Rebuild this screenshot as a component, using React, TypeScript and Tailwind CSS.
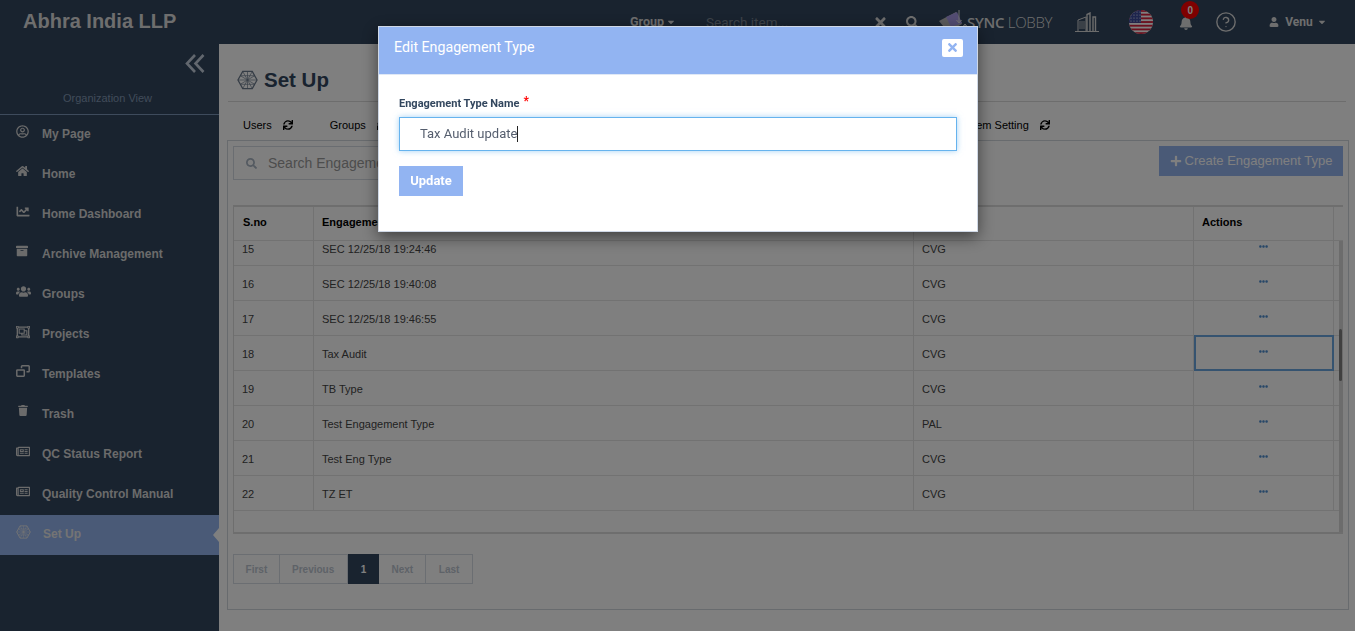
import React from "react";
import {
  FaRegUserCircle, FaHome, FaChartLine, FaArchive, FaUsers, FaRegObjectGroup,
  FaTrash, FaRegNewspaper, FaSync, FaSearch, FaTimes, FaCaretDown, FaUser,
  FaBell, FaPlus, FaEllipsisH,
} from "react-icons/fa";
import { CircleHelp } from "lucide-react";

function Hex({ className }: { className?: string }) {
  return (
    <svg viewBox="0 0 22 20" className={className} fill="none" stroke="currentColor">
      <path d="M6 1h10l5 9-5 9H6L1 10z" strokeWidth="1.3" />
      <path d="M6 1l10 18M16 1L6 19M1 10h20M3.5 5.5l15 9M18.5 5.5l-15 9M11 1v18M3.5 14.5h15M3.5 5.5h15" strokeWidth="0.7" />
    </svg>
  );
}

function Ungroup({ className }: { className?: string }) {
  return (
    <svg viewBox="0 0 14 12" className={className} fill="none" stroke="currentColor" strokeWidth="1.5">
      <rect x="0.8" y="5" width="7.5" height="6.2" rx="0.6" />
      <path d="M5.5 3.2V1.5a.7.7 0 0 1 .7-.7h6.3a.7.7 0 0 1 .7.7v4.6a.7.7 0 0 1-.7.7h-2" />
    </svg>
  );
}

function Flag() {
  const stripes = [0, 2, 4, 6, 8, 10, 12];
  return (
    <svg viewBox="0 0 24 24" className="w-6 h-6">
      <defs>
        <clipPath id="flag-circle">
          <circle cx="12" cy="12" r="12" />
        </clipPath>
      </defs>
      <g clipPath="url(#flag-circle)">
        <rect width="24" height="24" fill="#ffffff" />
        {stripes.map((s) => (
          <rect key={s} x="0" y={s * 1.85} width="24" height="1.85" fill="#d8203c" />
        ))}
        <rect width="12" height="12.9" fill="#3c4a9c" />
        {[2, 5, 8, 11].map((y) =>
          [2, 5, 8, 11].map((x) => <circle key={`${x}-${y}`} cx={x} cy={y} r="0.6" fill="#ffffff" />)
        )}
      </g>
    </svg>
  );
}

function Building() {
  return (
    <svg viewBox="0 0 24 20" className="w-[24px] h-[20px]" fill="none" stroke="#d8d8d8" strokeWidth="1">
      <path d="M0 19.5h24" />
      <path d="M3 19V8l8-3v14" />
      <path d="M4 10h6M4 12h6M4 14h6M4 16h6" strokeWidth="0.8" />
      <path d="M12 19V2.5l3-1.5V19" strokeWidth="1.4" />
      <path d="M18 19V5h2.5v14" strokeWidth="1.4" />
    </svg>
  );
}

function SyncLogo() {
  return (
    <div className="flex items-center">
      <svg viewBox="0 0 30 26" className="w-[30px] h-[26px]">
        <path d="M1 12L18 3l6 12-14 8z" fill="#b9b9b9" />
        <path d="M8 8l11-5 5 11-11 4z" fill="#a79ae6" />
        <path d="M21 1v13M18.5 11l2.5 3 2.5-3M27 24V15M24.5 18l2.5-3 2.5 3" stroke="#e4e4e4" strokeWidth="1" fill="none" />
      </svg>
      <span className="ml-[-1px] text-[15px] text-[#dcdcdc] font-['Open_Sans',sans-serif] tracking-[-0.3px]">
        <span className="font-semibold">SYNC</span> <span className="font-light">LOBBY</span>
      </span>
    </div>
  );
}

const menu: [React.ReactNode, string][] = [
  [<FaRegUserCircle className="w-[13px] h-[13px]" />, "My Page"],
  [<FaHome className="w-[13px] h-[12px]" />, "Home"],
  [<FaChartLine className="w-[14px] h-[13px]" />, "Home Dashboard"],
  [<FaArchive className="w-[12px] h-[12px]" />, "Archive Management"],
  [<FaUsers className="w-[15px] h-[15px] -mt-[1px]" />, "Groups"],
  [<FaRegObjectGroup className="w-[14px] h-[14px]" />, "Projects"],
  [<Ungroup className="w-[14px] h-[12px]" />, "Templates"],
  [<FaTrash className="w-[10px] h-[11px] ml-[2px]" />, "Trash"],
  [<FaRegNewspaper className="w-[14px] h-[13px]" />, "QC Status Report"],
  [<FaRegNewspaper className="w-[14px] h-[13px]" />, "Quality Control Manual"],
];

const rows: [string, string, string][] = [
  ["15", "SEC 12/25/18 19:24:46", "CVG"],
  ["16", "SEC 12/25/18 19:40:08", "CVG"],
  ["17", "SEC 12/25/18 19:46:55", "CVG"],
  ["18", "Tax Audit", "CVG"],
  ["19", "TB Type", "CVG"],
  ["20", "Test Engagement Type", "PAL"],
  ["21", "Test Eng Type", "CVG"],
  ["22", "TZ ET", "CVG"],
];

const cols = "grid grid-cols-[80px_600px_280px_140px]";

function Sidebar() {
  return (
    <aside className="w-[219px] shrink-0 bg-[#32465e] flex flex-col">
      <div className="h-[70px] relative shrink-0">
        <div className="flex justify-end pr-[14px] pt-[10px] text-[#c4cedd]">
          <svg viewBox="0 0 20 19" className="w-[20px] h-[19px]" fill="none" stroke="currentColor" strokeWidth="2.6">
            <path d="M10 1L2 9.5 10 18M18.5 1L10.5 9.5l8 8.5" />
          </svg>
        </div>
        <div className="absolute left-0 right-[4px] top-[46px] text-center text-[11px] text-[#8298b4]">Organization View</div>
      </div>
      <div className="border-t border-[#7d97b8]">
        {menu.map(([icon, label]) => (
          <div key={label} className="h-[40px] flex text-[#d6d6d6] pl-[16px]">
            <span className="w-[26px] pt-[10px] shrink-0">{icon}</span>
            <span className="pt-[12px] text-[12px] leading-[14px] font-bold">{label}</span>
          </div>
        ))}
        <div className="h-[40px] flex text-[#e8e8e8] pl-[16px] bg-[#94b4ee] relative">
          <span className="w-[27px] pt-[10px] shrink-0"><Hex className="w-[15px] h-[14px]" /></span>
          <span className="pt-[12px] text-[12px] leading-[14px] font-bold">Set Up</span>
          <span className="absolute right-0 top-[13px] w-0 h-0 border-y-[7px] border-y-transparent border-r-[6px] border-r-white" />
        </div>
      </div>
    </aside>
  );
}

function Tab({ label, className }: { label: string; className?: string }) {
  return (
    <div className={`flex items-center text-[11px] text-black ${className ?? ""}`}>
      <span>{label}</span>
      <FaSync className="w-[10px] h-[10px] ml-[11px]" />
    </div>
  );
}

function Table() {
  return (
    <div className="ml-[5px] mt-[25px] h-[329px] border-2 border-l border-r-0 border-[#dcdcdc] relative overflow-hidden w-[1110px] bg-white">
      <div className={`${cols} h-[34px] text-[11px] font-bold text-black border-b border-[#e4e4e4]`}>
        <div className="px-[9px] pb-[2px] flex items-center border-r border-[#e4e4e4]">S.no</div>
        <div className="px-[8px] pb-[2px] flex items-center border-r border-[#e4e4e4]">Engagement Type</div>
        <div className="px-[8px] pb-[2px] flex items-center border-r border-[#e4e4e4]">Client</div>
        <div className="px-[8px] pb-[2px] flex items-center border-r border-[#e4e4e4]">Actions</div>
      </div>
      <div className="-mt-[10px]">
        {rows.map(([n, name, by]) => {
          const selected = n === "18";
          return (
            <div key={n} className={`${cols} h-[35px] text-[11px] text-[#444] border-b border-[#e4e4e4]`}>
              <div className="px-[8px] pt-[2px] flex items-center border-r border-[#e4e4e4]">{n}</div>
              <div className="px-[8px] pt-[2px] flex items-center border-r border-[#e4e4e4]">{name}</div>
              <div className="px-[8px] pt-[2px] flex items-center border-r border-[#e4e4e4]">{by}</div>
              <div className={`flex justify-center text-[#4f8fd0] ${selected ? "border-2 border-[#6ba6e0] pt-[10px] pr-[1px] -my-px" : "pt-[11px] border-r border-[#e4e4e4]"}`}>
                <FaEllipsisH className="w-[9px] h-[9px]" />
              </div>
            </div>
          );
        })}
      </div>
      <div className="absolute top-[34px] right-0 w-[4px] bottom-0 bg-[#d8d8d8]">
        <div className="absolute top-[88px] h-[52px] w-[3px] left-0 rounded bg-[#808080]" />
      </div>
    </div>
  );
}

function Pagination() {
  const items: [string, string][] = [["First", "w-[47px]"], ["Previous", "w-[68px]"], ["1", "w-[32px]"], ["Next", "w-[47px]"], ["Last", "w-[47px]"]];
  return (
    <div className="flex ml-[5px] mt-[20px] h-[30px] w-[240px]">
      {items.map(([t, w]) => (
        <div
          key={t}
          className={`${w} flex items-center justify-center text-[10px] font-bold ${t === "1" ? "bg-[#32465e] text-white" : "border border-l-0 first:border-l border-[#d6dce4] text-[#bcc5d0]"}`}
        >
          {t}
        </div>
      ))}
    </div>
  );
}

function Main() {
  return (
    <main className="flex-1 bg-white pl-[8px] pr-[6px] min-w-0">
      <div className="h-[58px] ml-px w-[1118px] border-b border-[#dadada] flex items-center pl-[9px] pt-[15px] gap-[6px] text-[#32465e]">
        <Hex className="w-[21px] h-[20px] text-[#6b7a8c]" />
        <h1 className="text-[20.5px] font-bold leading-none">Set Up</h1>
      </div>
      <div className="h-[38px] flex items-center pl-[16px] pt-[8px]">
        <Tab label="Users" />
        <Tab label="Groups" className="ml-[37px]" />
        <Tab label="System Setting" className="ml-[568px]" />
      </div>
      <div className="border border-[#d0d6dc] h-[470px] w-[1122px]">
        <div className="flex justify-between items-start pt-[5px] pl-[5px] pr-[5px]">
          <div className="w-[400px] h-[34px] border border-[#d5dbe3] flex items-center pl-[12px] text-[#a8b4c2] text-[14px]">
            <FaSearch className="w-[11px] h-[11px]" />
            <span className="ml-[11px] text-[#9a9a9a]">Search Engagement Type</span>
          </div>
          <div className="w-[184px] h-[30px] bg-[#94b4ee] text-white flex items-center justify-center text-[13px] gap-[3px]">
            <FaPlus className="w-[12px] h-[12px]" />
            <span>Create Engagement Type</span>
          </div>
        </div>
        <Table />
        <Pagination />
      </div>
    </main>
  );
}

function Modal() {
  return (
    <div className="fixed left-[378px] top-[26px] w-[600px] h-[206px] bg-white border border-[#cfd8e6] shadow-[0_5px_15px_rgba(0,0,0,0.5)] z-20 font-['Roboto',sans-serif]">
      <div className="h-[48px] bg-[#92b4f2] flex items-center justify-between pl-[15px] pr-[14px] pb-[6px] border-b border-[#dfe8f6]">
        <span className="text-[14.2px] text-white">Edit Engagement Type</span>
        <span className="w-[21px] h-[18px] rounded-[2px] bg-white flex items-center justify-center text-[#92b4f2]">
          <FaTimes className="w-[13px] h-[13px]" />
        </span>
      </div>
      <div className="pl-[20px] pr-[20px]">
        <div className="h-[42px] flex items-end pb-[5px] text-[11px] font-bold text-[#32465e] relative">
          Engagement Type Name
          <span className="text-[#ff0000] text-[12px] ml-[4px] leading-[14px] relative -top-[4px]">*</span>
        </div>
        <div className="h-[34px] border border-[#66b3ee] shadow-[0_0_6px_rgba(102,179,238,0.6)] flex items-center pl-[20px] text-[13px] text-[#555e6e]">
          Tax Audit update
          <span className="w-px h-[16px] bg-[#222]" />
        </div>
        <div className="mt-[15px] w-[64px] h-[30px] bg-[#92b4f2] text-white font-bold text-[13px] flex items-center justify-center">Update</div>
      </div>
    </div>
  );
}

export default function App() {
  return (
    <div className="h-screen w-full overflow-hidden relative flex flex-col font-['Liberation_Sans',sans-serif]">
      <header className="h-[44px] shrink-0 bg-[#32465e] flex items-center text-[#dcdcdc] relative">
        <div className="pl-[23px] pb-[2px] text-[20px] font-bold w-[630px]">Abhra India LLP</div>
        <div className="flex items-center text-[12.5px] font-bold font-['Roboto',sans-serif] w-[76px]">
          Group <FaCaretDown className="w-[10px] h-[10px] ml-[2px]" />
        </div>
        <div className="text-[13.5px] text-[#7d8894] font-['Roboto',sans-serif] w-[167px]">Search item...</div>
        <FaTimes className="w-[15px] h-[15px]" />
        <FaSearch className="w-[13px] h-[13px] ml-[18px]" />
        <div className="ml-[19px]"><SyncLogo /></div>
        <div className="ml-[23px]"><Building /></div>
        <div className="ml-[30px]"><Flag /></div>
        <div className="ml-[26px] relative">
          <FaBell className="w-[14px] h-[14px] mt-[2px]" />
          <span className="absolute -top-[13px] left-[2px] w-[18px] h-[18px] rounded-full bg-[#ff0000] text-white text-[10px] font-bold flex items-center justify-center">0</span>
        </div>
        <CircleHelp className="w-[22px] h-[22px] ml-[22px]" strokeWidth={1.5} />
        <FaUser className="w-[10px] h-[10px] ml-[32px]" />
        <span className="text-[12px] font-bold font-['Roboto',sans-serif] ml-[6px]">Venu</span>
        <FaCaretDown className="w-[10px] h-[10px] ml-[4px]" />
      </header>
      <div className="flex-1 flex min-h-0 bg-[#32465e]">
        <Sidebar />
        <Main />
      </div>
      <div className="fixed inset-0 bg-black/50 z-10" />
      <Modal />
    </div>
  );
}
